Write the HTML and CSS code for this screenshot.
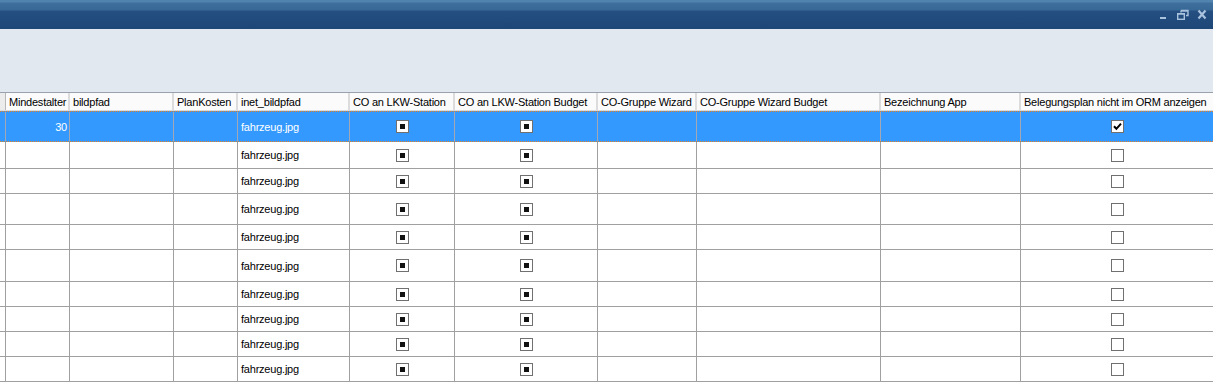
FILE: index.html
```html
<!DOCTYPE html>
<html lang="de">
<head>
<meta charset="utf-8">
<title>Grid</title>
<link rel="stylesheet" href="styles.css">
</head>
<body>
<div class="window">
  <div class="titlebar">
    <div class="winbtns">
      <svg width="50" height="12" viewBox="0 0 50 12">
        <rect x="2" y="8" width="6" height="2" fill="#a9c2de"/>
        <path d="M23 1.5h7v5h-2M23 1.5v2" fill="none" stroke="#a9c2de" stroke-width="1.4"/>
        <rect x="23" y="1" width="7" height="1.6" fill="#a9c2de"/>
        <rect x="19.7" y="4.7" width="6.6" height="5.6" fill="none" stroke="#a9c2de" stroke-width="1.4"/>
        <rect x="19.7" y="4" width="6.6" height="1.6" fill="#a9c2de"/>
        <path d="M40.5 1.5l7 8M47.5 1.5l-7 8" stroke="#a9c2de" stroke-width="2.2"/>
      </svg>
    </div>
  </div>
  <div class="panel"></div>
  <div class="grid">
    <div class="row head">
      <div class="c"></div>
      <div class="c">Mindestalter</div>
      <div class="c">bildpfad</div>
      <div class="c">PlanKosten</div>
      <div class="c">inet_bildpfad</div>
      <div class="c">CO an LKW-Station</div>
      <div class="c">CO an LKW-Station Budget</div>
      <div class="c">CO-Gruppe Wizard</div>
      <div class="c">CO-Gruppe Wizard Budget</div>
      <div class="c">Bezeichnung App</div>
      <div class="c">Belegungsplan nicht im ORM anzeigen</div>
    </div>
    <div class="row sel h31">
      <div class="c"></div>
      <div class="c num">30</div>
      <div class="c"></div>
      <div class="c"></div>
      <div class="c">fahrzeug.jpg</div>
      <div class="c ctr"><span class="box ind"></span></div>
      <div class="c ctr"><span class="box ind"></span></div>
      <div class="c"></div>
      <div class="c"></div>
      <div class="c"></div>
      <div class="c ctr"><span class="box on"><svg width="11" height="11" viewBox="0 0 11 11"><path d="M2 5.2l2.4 2.6L9 2.6" fill="none" stroke="#000" stroke-width="2"/></svg></span></div>
    </div>
    <div class="row h27">
      <div class="c"></div><div class="c"></div><div class="c"></div><div class="c"></div>
      <div class="c">fahrzeug.jpg</div>
      <div class="c ctr"><span class="box ind"></span></div>
      <div class="c ctr"><span class="box ind"></span></div>
      <div class="c"></div><div class="c"></div><div class="c"></div>
      <div class="c ctr"><span class="box"></span></div>
    </div>
    <div class="row h25">
      <div class="c"></div><div class="c"></div><div class="c"></div><div class="c"></div>
      <div class="c">fahrzeug.jpg</div>
      <div class="c ctr"><span class="box ind"></span></div>
      <div class="c ctr"><span class="box ind"></span></div>
      <div class="c"></div><div class="c"></div><div class="c"></div>
      <div class="c ctr"><span class="box"></span></div>
    </div>
    <div class="row h31">
      <div class="c"></div><div class="c"></div><div class="c"></div><div class="c"></div>
      <div class="c">fahrzeug.jpg</div>
      <div class="c ctr"><span class="box ind"></span></div>
      <div class="c ctr"><span class="box ind"></span></div>
      <div class="c"></div><div class="c"></div><div class="c"></div>
      <div class="c ctr"><span class="box"></span></div>
    </div>
    <div class="row h25">
      <div class="c"></div><div class="c"></div><div class="c"></div><div class="c"></div>
      <div class="c">fahrzeug.jpg</div>
      <div class="c ctr"><span class="box ind"></span></div>
      <div class="c ctr"><span class="box ind"></span></div>
      <div class="c"></div><div class="c"></div><div class="c"></div>
      <div class="c ctr"><span class="box"></span></div>
    </div>
    <div class="row h32">
      <div class="c"></div><div class="c"></div><div class="c"></div><div class="c"></div>
      <div class="c">fahrzeug.jpg</div>
      <div class="c ctr"><span class="box ind"></span></div>
      <div class="c ctr"><span class="box ind"></span></div>
      <div class="c"></div><div class="c"></div><div class="c"></div>
      <div class="c ctr"><span class="box"></span></div>
    </div>
    <div class="row h25">
      <div class="c"></div><div class="c"></div><div class="c"></div><div class="c"></div>
      <div class="c">fahrzeug.jpg</div>
      <div class="c ctr"><span class="box ind"></span></div>
      <div class="c ctr"><span class="box ind"></span></div>
      <div class="c"></div><div class="c"></div><div class="c"></div>
      <div class="c ctr"><span class="box"></span></div>
    </div>
    <div class="row h25">
      <div class="c"></div><div class="c"></div><div class="c"></div><div class="c"></div>
      <div class="c">fahrzeug.jpg</div>
      <div class="c ctr"><span class="box ind"></span></div>
      <div class="c ctr"><span class="box ind"></span></div>
      <div class="c"></div><div class="c"></div><div class="c"></div>
      <div class="c ctr"><span class="box"></span></div>
    </div>
    <div class="row h25">
      <div class="c"></div><div class="c"></div><div class="c"></div><div class="c"></div>
      <div class="c">fahrzeug.jpg</div>
      <div class="c ctr"><span class="box ind"></span></div>
      <div class="c ctr"><span class="box ind"></span></div>
      <div class="c"></div><div class="c"></div><div class="c"></div>
      <div class="c ctr"><span class="box"></span></div>
    </div>
    <div class="row h25">
      <div class="c"></div><div class="c"></div><div class="c"></div><div class="c"></div>
      <div class="c">fahrzeug.jpg</div>
      <div class="c ctr"><span class="box ind"></span></div>
      <div class="c ctr"><span class="box ind"></span></div>
      <div class="c"></div><div class="c"></div><div class="c"></div>
      <div class="c ctr"><span class="box"></span></div>
    </div>
  </div>
</div>
</body>
</html>
```
FILE: styles.css
```css
* { box-sizing: border-box; }
html, body { margin: 0; padding: 0; }
body {
  width: 1213px;
  height: 385px;
  overflow: hidden;
  background: #ffffff;
  font-family: "Liberation Sans", Arial, sans-serif;
  font-size: 11px;
  letter-spacing: -0.22px;
  color: #000;
}
.window { width: 1213px; }
.titlebar {
  height: 29px;
  background: linear-gradient(to bottom, #5284b0 0, #5284b0 2px, #3e6f9d 3px, #386896 10px, #244f80 11px, #1e4777 29px);
  display: flex;
  justify-content: flex-end;
  align-items: flex-start;
  padding: 9px 5px 0 0;
}
.winbtns svg { display: block; }
.panel {
  height: 64px;
  background: #e1e8f0;
  border-bottom: 1px solid #9aa2ab;
}
.row {
  display: grid;
  grid-template-columns: 6px 64px 104px 64px 112px 105px 143px 99px 184px 140px 192px;
  border-bottom: 1px solid #a0a0a0;
}
.row .c {
  border-right: 1px solid #a0a0a0;
  display: flex;
  align-items: center;
  padding-left: 3px;
  white-space: nowrap;
  overflow: hidden;
}
.row .c:first-child { padding-left: 0; }
.row .c:last-child { border-right: none; }
.row.head {
  height: 18px;
  background: #fbfbfb;
  border-bottom: 1px solid #dadada;
}
.row.head .c {
  border-right: 2px solid #dcdcdc;
  padding-top: 1px;
}
.row.head .c:first-child { background: #ececec; border-right: 1px solid #b8b8b8; }
.row.head .c:last-child { border-right: none; }
.h25 { height: 25px; }
.h27 { height: 27px; }
.h31 { height: 31px; }
.h32 { height: 32px; }
.row.sel {
  background: #3399ff;
  color: #ffffff;
  border-top: 1px dotted #e8801f;
  border-bottom: 1px dotted #e8801f;
}
.row.sel .c { border-right-color: #a4a8b4; }
.num { justify-content: flex-end; padding-right: 2px; }
.ctr { justify-content: center; padding-left: 0 !important; }
.box {
  width: 13px;
  height: 13px;
  border: 1px solid #707070;
  background: #ffffff;
  display: flex;
  align-items: center;
  justify-content: center;
}
.box.ind::after {
  content: "";
  width: 5px;
  height: 5px;
  background: #111;
}
.box svg { display: block; }
```
